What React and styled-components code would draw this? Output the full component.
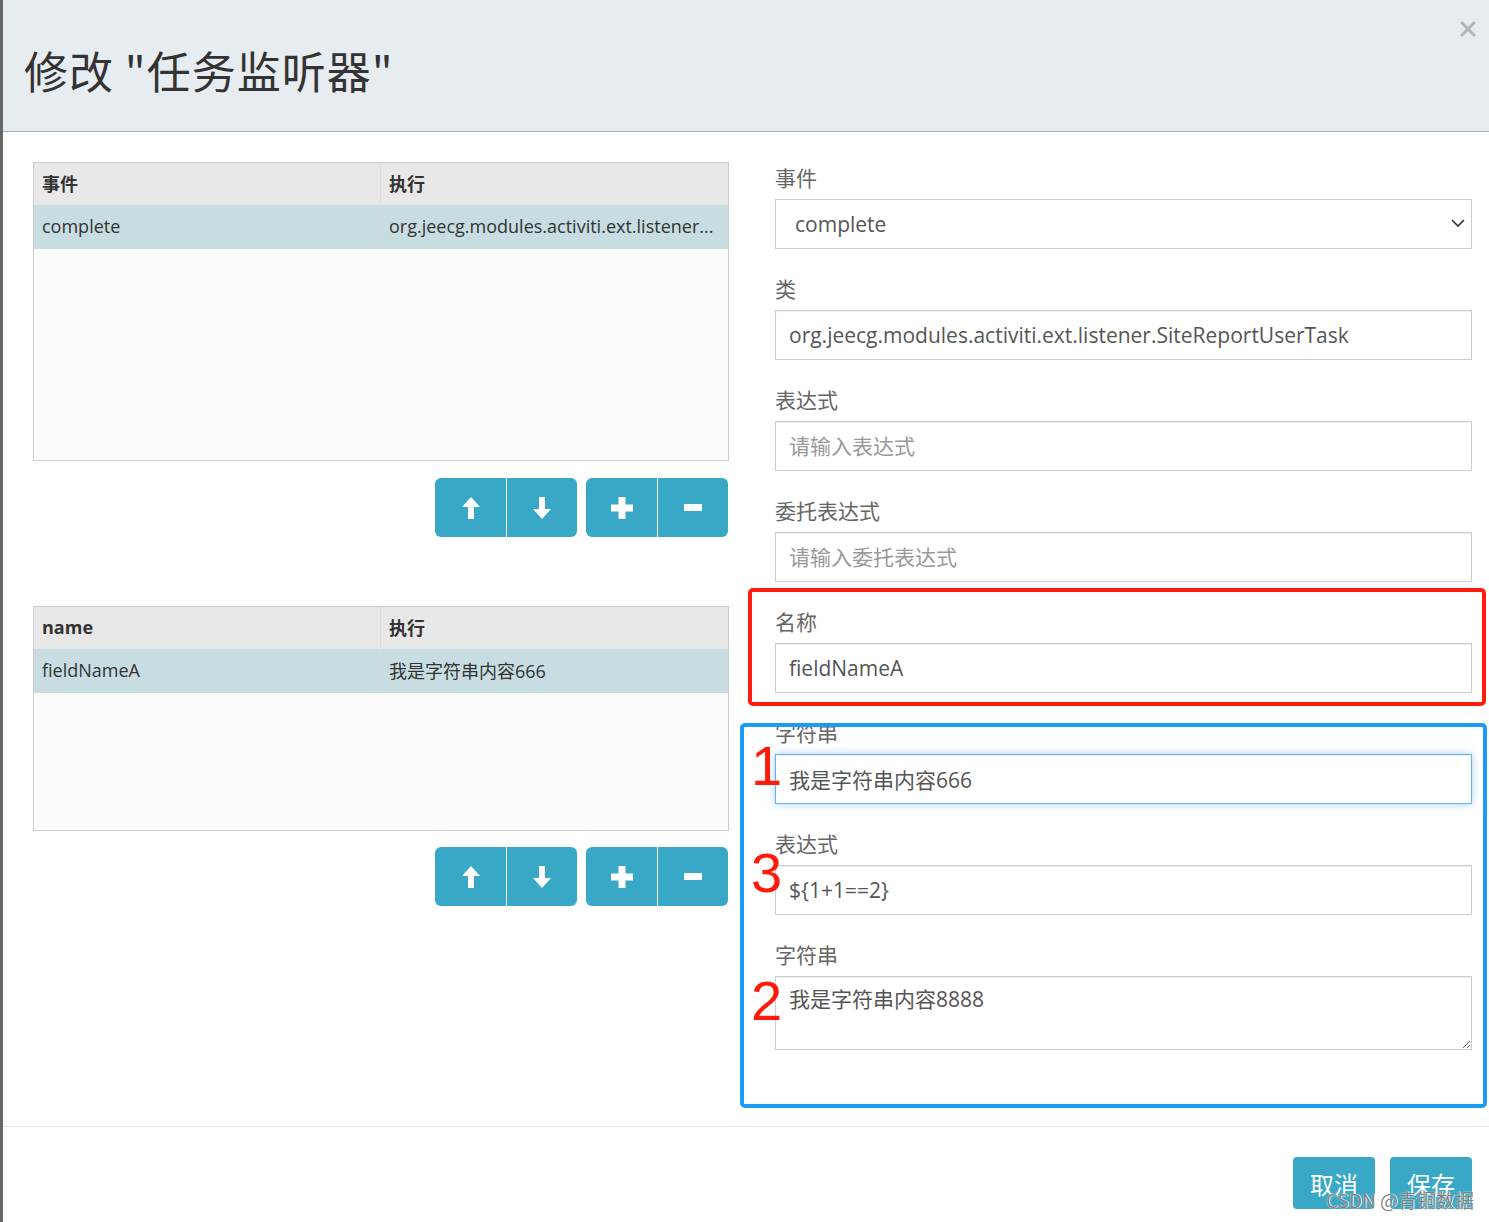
import React from "react";
import styled, { createGlobalStyle } from "styled-components";

const Global = createGlobalStyle`
  html, body { margin: 0; padding: 0; }
  body {
    background: #676767;
    font-family: "Open Sans", "Noto Sans CJK SC", sans-serif;
  }
  * { box-sizing: border-box; }
`;

const Modal = styled.div`
  margin-left: 3px;
  width: 1486px;
  height: 1222px;
  background: #fff;
  position: relative;
  overflow: hidden;
`;

const Header = styled.div`
  position: relative;
  height: 132px;
  background: #e7ecf0;
  border-bottom: 1px solid #a7adb3;
  display: flex;
  align-items: center;
  padding: 8px 0 0 21px;
`;

const Title = styled.h1`
  margin: 0;
  font-family: "Noto Sans CJK SC", sans-serif;
  font-size: 44px;
  font-weight: 400;
  letter-spacing: 1px;
  color: #333;
`;

const Close = styled.button`
  position: absolute;
  top: 20px;
  right: 12px;
  width: 18px;
  height: 18px;
  padding: 0;
  border: none;
  background: transparent;
  display: flex;
`;

const Body = styled.div`
  display: grid;
  grid-template-columns: 696px 697px;
  column-gap: 46px;
  align-items: start;
  padding: 30px 17px 76px 30px;
`;

const LeftCol = styled.div`
  display: flex;
  flex-direction: column;
`;

const Table = styled.div`
  height: ${(p) => p.$h}px;
  margin-top: ${(p) => p.$mt || 0}px;
  border: 1px solid #ccc;
  background: #fcfcfc;
`;

const Row = styled.div`
  display: grid;
  grid-template-columns: 346px 1fr;
  height: ${(p) => (p.$head ? 42 : 44)}px;
  background: ${(p) => (p.$head ? "#e8e8e8" : "#c8dde1")};
`;

const Cell = styled.div`
  display: flex;
  align-items: center;
  padding: 0 8px 2px;
  font-size: 18px;
  color: #333;
  font-weight: ${(p) => (p.$head ? 700 : 400)};
  white-space: nowrap;
  overflow: hidden;
  & + & {
    border-left: 1px solid #ddd;
  }
`;

const ButtonRow = styled.div`
  display: flex;
  justify-content: flex-end;
  gap: 9px;
  padding-right: 1px;
  margin-top: ${(p) => p.$mt}px;
`;

const BtnGroup = styled.div`
  display: flex;
  border-radius: 6px;
  overflow: hidden;
`;

const IconBtn = styled.button`
  width: 71px;
  height: 59px;
  border: none;
  padding: 0;
  background: #38a8c6;
  display: flex;
  align-items: center;
  justify-content: center;
  & + & {
    border-left: 1px solid #fff;
  }
`;

const RightCol = styled.div`
  display: flex;
  flex-direction: column;
  gap: 28px;
  padding-top: 4px;
`;

const Annotated = styled.div`
  position: relative;
  display: flex;
  flex-direction: column;
  gap: 28px;
`;

const Frame = styled.div`
  position: absolute;
  top: ${(p) => p.$t}px;
  left: ${(p) => p.$l}px;
  right: ${(p) => p.$r}px;
  bottom: ${(p) => p.$b}px;
  border: 4px solid ${(p) => p.$color};
  border-radius: 5px;
  pointer-events: none;
  z-index: 2;
`;

const Field = styled.div`
  display: flex;
  flex-direction: column;
`;

const Label = styled.label`
  display: block;
  font-size: 21px;
  line-height: 24px;
  color: #666;
  margin-bottom: 9px;
`;

const Control = styled.div`
  position: relative;
`;

const Input = styled.input`
  display: block;
  width: 100%;
  height: 50px;
  border: 1px solid ${(p) => (p.$focus ? "#66afe9" : "#ccc")};
  padding: 0 13px;
  font-family: inherit;
  font-size: 21px;
  color: #555;
  background: #fff;
  outline: none;
  box-shadow: ${(p) =>
    p.$focus
      ? "inset 0 1px 1px rgba(0,0,0,.075), 0 0 8px rgba(102,175,233,.6)"
      : "inset 0 1px 1px rgba(0,0,0,.075)"};
  &::placeholder {
    color: #999;
  }
`;

const Select = styled.select`
  display: block;
  width: 100%;
  height: 50px;
  border: 1px solid #ccc;
  padding: 0 19px;
  font-family: inherit;
  font-size: 21px;
  color: #555;
  background: #fff;
  appearance: none;
  outline: none;
`;

const Chevron = styled.svg`
  position: absolute;
  right: 7px;
  top: 20px;
  pointer-events: none;
`;

const TextArea = styled.textarea`
  display: block;
  width: 100%;
  height: 74px;
  border: 1px solid #ccc;
  padding: 9px 13px;
  font-family: inherit;
  font-size: 21px;
  line-height: 1.3;
  color: #555;
  background: #fff;
  resize: vertical;
  outline: none;
  box-shadow: inset 0 1px 1px rgba(0, 0, 0, 0.075);
`;

const Num = styled.span`
  position: absolute;
  left: -24px;
  top: ${(p) => p.$t}px;
  font-family: "Liberation Sans", sans-serif;
  font-size: 56px;
  line-height: 1;
  color: #ff1a0a;
  pointer-events: none;
  z-index: 3;
`;

const Footer = styled.div`
  display: flex;
  justify-content: flex-end;
  gap: 15px;
  padding: 30px 17px 0;
  border-top: 1px solid #e5e5e5;
`;

const FooterBtn = styled.button`
  width: 82px;
  height: 52px;
  border: none;
  border-radius: 4px;
  background: #38a8c6;
  color: #fff;
  font-family: "Noto Sans CJK SC", sans-serif;
  font-size: 24px;
  padding: 0;
`;

const Watermark = styled.div`
  position: absolute;
  right: 15px;
  bottom: 9px;
  font-family: "Noto Sans CJK SC", sans-serif;
  font-size: 19px;
  color: rgba(95, 95, 95, 0.8);
  text-shadow: 0 0 1px #fff, 1px 0 1px #fff;
  pointer-events: none;
`;

const UpIcon = () => (
  <svg width="18" height="22" viewBox="0 0 18 22">
    <path d="M9 0 L18 10 L12 10 L12 22 L6 22 L6 10 L0 10 Z" fill="#fff" />
  </svg>
);
const DownIcon = () => (
  <svg width="18" height="22" viewBox="0 0 18 22">
    <path d="M9 22 L18 12 L12 12 L12 0 L6 0 L6 12 L0 12 Z" fill="#fff" />
  </svg>
);
const PlusIcon = () => (
  <svg width="22" height="22" viewBox="0 0 22 22">
    <path d="M7.5 0 H14.5 V7.5 H22 V14.5 H14.5 V22 H7.5 V14.5 H0 V7.5 H7.5 Z" fill="#fff" />
  </svg>
);
const MinusIcon = () => (
  <svg width="18" height="7" viewBox="0 0 18 7">
    <rect width="18" height="7" fill="#fff" />
  </svg>
);

const Buttons = ({ mt }) => (
  <ButtonRow $mt={mt}>
    <BtnGroup>
      <IconBtn><UpIcon /></IconBtn>
      <IconBtn><DownIcon /></IconBtn>
    </BtnGroup>
    <BtnGroup>
      <IconBtn><PlusIcon /></IconBtn>
      <IconBtn><MinusIcon /></IconBtn>
    </BtnGroup>
  </ButtonRow>
);

const DataTable = ({ h, mt, head, row }) => (
  <Table $h={h} $mt={mt}>
    <Row $head>
      <Cell $head>{head[0]}</Cell>
      <Cell $head>{head[1]}</Cell>
    </Row>
    <Row>
      <Cell>{row[0]}</Cell>
      <Cell>{row[1]}</Cell>
    </Row>
  </Table>
);

export default function App() {
  return (
    <>
      <Global />
      <Modal>
        <Header>
          <Title>修改 "任务监听器"</Title>
          <Close aria-label="close">
            <svg width="18" height="18" viewBox="0 0 18 18">
              <path d="M2 2 L16 16 M16 2 L2 16" stroke="#b4b4b4" strokeWidth="3" />
            </svg>
          </Close>
        </Header>
        <Body>
          <LeftCol>
            <DataTable
              h={299}
              head={["事件", "执行"]}
              row={["complete", "org.jeecg.modules.activiti.ext.listener..."]}
            />
            <Buttons mt={17} />
            <DataTable
              h={225}
              mt={69}
              head={["name", "执行"]}
              row={["fieldNameA", "我是字符串内容666"]}
            />
            <Buttons mt={16} />
          </LeftCol>
          <RightCol>
            <Field>
              <Label>事件</Label>
              <Control>
                <Select defaultValue="complete">
                  <option value="create">create</option>
                  <option value="assignment">assignment</option>
                  <option value="complete">complete</option>
                </Select>
                <Chevron width="14" height="9" viewBox="0 0 14 9">
                  <path d="M1 1 L7 7 L13 1" fill="none" stroke="#333" strokeWidth="1.6" />
                </Chevron>
              </Control>
            </Field>
            <Field>
              <Label>类</Label>
              <Input readOnly defaultValue="org.jeecg.modules.activiti.ext.listener.SiteReportUserTask" />
            </Field>
            <Field>
              <Label>表达式</Label>
              <Input readOnly placeholder="请输入表达式" />
            </Field>
            <Field>
              <Label>委托表达式</Label>
              <Input readOnly placeholder="请输入委托表达式" />
            </Field>
            <Annotated>
              <Frame $color="#ff1c0e" $t={-22} $l={-27} $r={-14} $b={-13} />
              <Field>
                <Label>名称</Label>
                <Input readOnly defaultValue="fieldNameA" />
              </Field>
            </Annotated>
            <Annotated>
              <Frame $color="#1c9bf6" $t={2} $l={-35} $r={-15} $b={-58} />
              <Field>
                <Label>字符串</Label>
                <Control>
                  <Input $focus readOnly defaultValue="我是字符串内容666" />
                  <Num $t={-16}>1</Num>
                </Control>
              </Field>
              <Field>
                <Label>表达式</Label>
                <Control>
                  <Input readOnly defaultValue="${1+1==2}" />
                  <Num $t={-20}>3</Num>
                </Control>
              </Field>
              <Field>
                <Label>字符串</Label>
                <Control>
                  <TextArea readOnly defaultValue="我是字符串内容8888" />
                  <Num $t={-3}>2</Num>
                </Control>
              </Field>
            </Annotated>
          </RightCol>
        </Body>
        <Footer>
          <FooterBtn>取消</FooterBtn>
          <FooterBtn>保存</FooterBtn>
        </Footer>
        <Watermark>CSDN @青铜数据</Watermark>
      </Modal>
    </>
  );
}
